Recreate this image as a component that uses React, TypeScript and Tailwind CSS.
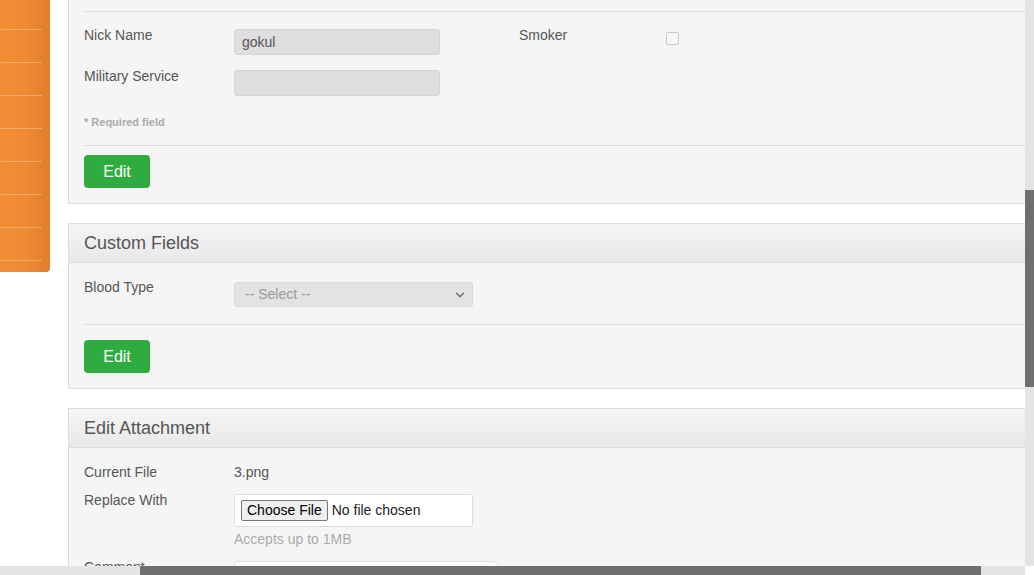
import { ChevronDown } from "lucide-react";

const sideItems = [30, 33, 33, 33, 33, 33, 33, 33];

function Sidebar() {
  return (
    <aside className="w-[50px] shrink-0 self-start">
      <div className="h-[272px] rounded-br-[4px] bg-gradient-to-r from-[#f28c35] via-[#f08a33] to-[#e17d2c]">
        <div className="pr-[8px]">
          {sideItems.map((h, i) => (
            <div
              key={i}
              className={`border-b border-[#f4a866] ${h === 30 ? "h-[30px]" : "h-[33px]"}`}
            />
          ))}
        </div>
      </div>
    </aside>
  );
}

function EditButton() {
  return (
    <button className="h-[33px] w-[66px] rounded-[4px] bg-[#2fac3f] text-[16px] text-white">
      Edit
    </button>
  );
}

function PanelHeader({ title }: { title: string }) {
  return (
    <div className="flex h-[39px] items-center border-b border-[#dddddd] bg-gradient-to-b from-[#f5f5f5] to-[#e8e8e8] px-[15px] text-[18px] text-[#555555]">
      {title}
    </div>
  );
}

function Field({ label, children }: { label: string; children?: React.ReactNode }) {
  return (
    <div className="flex items-start">
      <div className="w-[150px] shrink-0 leading-[18px]">{label}</div>
      {children}
    </div>
  );
}

export default function App() {
  return (
    <div className="h-[575px] w-[1034px] overflow-hidden bg-white font-['Liberation_Sans',Arial,sans-serif] text-[14px] text-[#555555]">
      <div className="flex h-[566px]">
        <Sidebar />
        <main className="ml-[18px] min-w-0 flex-1 overflow-hidden">
          {/* Personal details (scrolled) */}
          <section className="border-b border-l border-[#dddddd] bg-[#f5f5f5] pb-[15px] pl-[15px]">
            <div className="h-[12px] border-b border-[#dddddd]" />
            <div className="mt-[14px] grid grid-cols-[435px_435px]">
              <div className="flex flex-col gap-[12px]">
                <Field label="Nick Name">
                  <div className="mt-[3px] flex h-[26px] w-[206px] items-center rounded-[3px] border border-[#d4d4d4] bg-[#dedede] px-[7px] text-[#555555]">
                    gokul
                  </div>
                </Field>
                <Field label="Military Service">
                  <div className="mt-[3px] h-[26px] w-[206px] rounded-[3px] border border-[#d4d4d4] bg-[#dedede]" />
                </Field>
              </div>
              <div>
                <Field label="Smoker">
                  <div className="ml-[-3px] mt-[6px] h-[13px] w-[13px] rounded-[2px] border border-[#c9c9c9] bg-[#f7f7f7]" />
                </Field>
              </div>
            </div>
            <div className="mt-[19px] text-[11px] font-bold leading-[15px] text-[#aaaaaa]">
              * Required field
            </div>
            <div className="mt-[15px] border-t border-[#dddddd] pt-[9px]">
              <EditButton />
            </div>
          </section>

          {/* Custom fields */}
          <section className="mt-[19px] border-y border-l border-[#dddddd] bg-[#f5f5f5]">
            <PanelHeader title="Custom Fields" />
            <div className="pb-[15px] pl-[15px] pt-[15px]">
              <Field label="Blood Type">
                <div className="mt-[4px] flex h-[25px] w-[239px] items-center justify-between rounded-[3px] border border-[#dadada] bg-[#e3e3e3] pl-[10px] pr-[5px] text-[#999999]">
                  <span>-- Select --</span>
                  <ChevronDown size={14} strokeWidth={3} className="text-[#777777]" />
                </div>
              </Field>
              <div className="mt-[17px] border-t border-[#dddddd] pt-[15px]">
                <EditButton />
              </div>
            </div>
          </section>

          {/* Attachment */}
          <section className="mt-[19px] border-t border-l border-[#dddddd] bg-[#f5f5f5]">
            <PanelHeader title="Edit Attachment" />
            <div className="pl-[15px] pt-[15px]">
              <Field label="Current File">
                <div className="leading-[18px]">3.png</div>
              </Field>
              <div className="mt-[10px]">
                <Field label="Replace With">
                  <div className="mt-[3px] flex flex-col">
                    <div className="flex h-[33px] w-[239px] items-center rounded-[3px] border border-[#dddddd] bg-white pl-[6px] text-[#222222]">
                      <span className="flex h-[21px] items-center rounded-[2px] border border-[#767676] bg-[#efefef] px-[5px] text-black">
                        Choose File
                      </span>
                      <span className="ml-[4px] text-[#222222]">No file chosen</span>
                    </div>
                    <div className="mt-[3px] leading-[18px] text-[#aaaaaa]">Accepts up to 1MB</div>
                  </div>
                </Field>
              </div>
              <div className="mt-[10px]">
                <Field label="Comment">
                  <div className="mt-[3px] h-[30px] w-[264px] rounded-[3px] border border-[#dddddd] bg-white" />
                </Field>
              </div>
            </div>
          </section>
        </main>
        {/* vertical scrollbar */}
        <div className="w-[9px] shrink-0 bg-[#e4e4e4] pt-[190px]">
          <div className="h-[197px] bg-[#6f6f6f]" />
        </div>
      </div>
      {/* horizontal scrollbar */}
      <div className="flex h-[9px]">
        <div className="w-[140px] bg-[#e4e4e4]" />
        <div className="w-[841px] bg-[#6f6f6f]" />
        <div className="w-[44px] bg-[#e4e4e4]" />
        <div className="w-[9px] bg-white" />
      </div>
    </div>
  );
}
